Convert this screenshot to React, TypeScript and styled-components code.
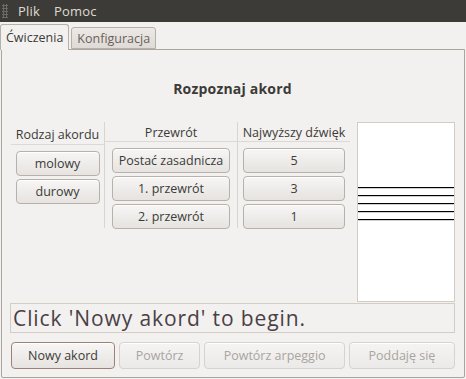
import * as React from 'react';
import styled, { createGlobalStyle } from 'styled-components';

const GlobalStyle = createGlobalStyle`
    html, body {
        margin: 0;
        padding: 0;
        background: #f2f1f0;
        font-family: "Open Sans", "DejaVu Sans", sans-serif;
    }
`;

const Window = styled.div`
    width: 466px;
    height: 379px;
    display: flex;
    flex-direction: column;
    background: #f2f1f0;
    color: #3c3b37;
    font-size: 12px;
    overflow: hidden;
`;

const MenuBar = styled.div`
    height: 22px;
    background: #3c3b37;
    display: flex;
    align-items: center;
    padding-left: 2px;
`;

const Grip = styled.div`
    width: 6px;
    height: 14px;
    margin-right: 3px;
    background-image: radial-gradient(circle, #6e6b65 1px, transparent 1.2px);
    background-size: 3px 3px;
`;

const MenuItem = styled.span`
    color: #dfdbd2;
    font-size: 13px;
    padding: 0 7px;
    letter-spacing: 0.2px;
`;

const TabBar = styled.div`
    height: 27px;
    display: flex;
    align-items: flex-end;
    gap: 2px;
    position: relative;
    z-index: 1;
`;

const Tab = styled.div<{ $active?: boolean }>`
    height: ${p => (p.$active ? 26 : 22)}px;
    margin-bottom: ${p => (p.$active ? -1 : 0)}px;
    padding: 0 5px;
    display: flex;
    align-items: center;
    font-size: 12.5px;
    color: ${p => (p.$active ? '#3c3b37' : '#6b5f5c')};
    background: ${p => (p.$active ? '#f2f1f0' : 'linear-gradient(#ece9e6, #dedad5)')};
    border: 1px solid #b7b0a8;
    border-bottom: ${p => (p.$active ? 'none' : '1px solid #b7b0a8')};
    border-radius: 3px 3px 0 0;
    box-sizing: border-box;
`;

const Panel = styled.div`
    flex: 1;
    margin: 0 1px 1px 1px;
    border: 1px solid #aca59d;
    border-radius: 0 0 2px 2px;
    display: flex;
    flex-direction: column;
    padding: 0 9px 0 8px;
`;

const Title = styled.div`
    height: 72px;
    display: flex;
    align-items: center;
    justify-content: center;
    padding-top: 5px;
    box-sizing: border-box;
    font-weight: bold;
    font-size: 14px;
    color: #3c3b37;
    letter-spacing: 0.2px;
`;

const MainRow = styled.div`
    display: flex;
    height: 180px;
`;

const Columns = styled.div`
    display: flex;
    height: 106px;
    margin-left: 1px;
`;

const Column = styled.div<{ $width: number; $sep?: boolean }>`
    width: ${p => p.$width}px;
    border-left: ${p => (p.$sep ? '1px solid #d9d5d0' : 'none')};
    display: flex;
    flex-direction: column;
    align-items: center;
`;

const Header = styled.div`
    height: 20px;
    width: 100%;
    display: flex;
    align-items: center;
    justify-content: center;
    padding-top: 2px;
    border-bottom: 1px solid #dcd8d3;
    margin-bottom: 6px;
    font-size: 12.5px;
    color: #3c3b37;
    white-space: nowrap;
`;

const ButtonStack = styled.div`
    display: flex;
    flex-direction: column;
    gap: 3px;
`;

const Button = styled.button<{ $width: number; $default?: boolean }>`
    width: ${p => p.$width}px;
    height: 25px;
    box-sizing: border-box;
    border: 1px solid ${p => (p.$default ? '#9d8179' : '#b8b1a9')};
    border-radius: 4px;
    background: linear-gradient(#f7f6f5, #e6e3e0);
    box-shadow: inset 0 1px 0 #ffffff;
    font-family: inherit;
    font-size: 12.5px;
    color: #3c3b37;
    padding: 0;
    white-space: nowrap;

    &:disabled {
        color: #a9a49f;
        border-color: #d6d2cd;
        background: linear-gradient(#f5f4f3, #eceae8);
    }
`;

const Staff = styled.div`
    margin-left: 7px;
    width: 100px;
    height: 180px;
    box-sizing: border-box;
    background: #ffffff;
    border: 1px solid #d2ccc5;
    padding-top: 64px;
`;

const StaffLine = styled.div`
    height: 1px;
    background: #000000;
    margin-bottom: 7px;
    box-shadow: 0 0.5px 0 rgba(0, 0, 0, 0.35);
`;

const Status = styled.div`
    margin-top: 1px;
    height: 30px;
    box-sizing: border-box;
    border: 1px solid #d3cdc6;
    display: flex;
    align-items: center;
    padding-left: 2px;
    font-size: 21px;
    color: #4a4045;
    letter-spacing: 0.9px;
    white-space: nowrap;
`;

const ButtonRow = styled.div`
    display: flex;
    gap: 4px;
    margin-top: 9px;
    margin-left: 1px;
    & > button {
        height: 27px;
    }
`;

export default function App() {
    return (
        <Window>
            <GlobalStyle />
            <MenuBar>
                <Grip />
                <MenuItem>Plik</MenuItem>
                <MenuItem>Pomoc</MenuItem>
            </MenuBar>
            <TabBar>
                <Tab $active>Ćwiczenia</Tab>
                <Tab>Konfiguracja</Tab>
            </TabBar>
            <Panel>
                <Title>Rozpoznaj akord</Title>
                <MainRow>
                    <Columns>
                        <Column $width={93}>
                            <Header>Rodzaj akordu</Header>
                            <ButtonStack>
                                <Button $width={84}>molowy</Button>
                                <Button $width={84}>durowy</Button>
                            </ButtonStack>
                        </Column>
                        <Column $width={132} $sep>
                            <Header>Przewrót</Header>
                            <ButtonStack>
                                <Button $width={118}>Postać zasadnicza</Button>
                                <Button $width={118}>1. przewrót</Button>
                                <Button $width={118}>2. przewrót</Button>
                            </ButtonStack>
                        </Column>
                        <Column $width={112} $sep>
                            <Header>Najwyższy dźwięk</Header>
                            <ButtonStack>
                                <Button $width={102}>5</Button>
                                <Button $width={102}>3</Button>
                                <Button $width={102}>1</Button>
                            </ButtonStack>
                        </Column>
                    </Columns>
                    <Staff>
                        {[0, 1, 2, 3, 4].map(i => (
                            <StaffLine key={i} />
                        ))}
                    </Staff>
                </MainRow>
                <Status>Click 'Nowy akord' to begin.</Status>
                <ButtonRow>
                    <Button $width={105} $default>Nowy akord</Button>
                    <Button $width={82} disabled>Powtórz</Button>
                    <Button $width={142} disabled>Powtórz arpeggio</Button>
                    <Button $width={107} disabled>Poddaję się</Button>
                </ButtonRow>
            </Panel>
        </Window>
    );
}
